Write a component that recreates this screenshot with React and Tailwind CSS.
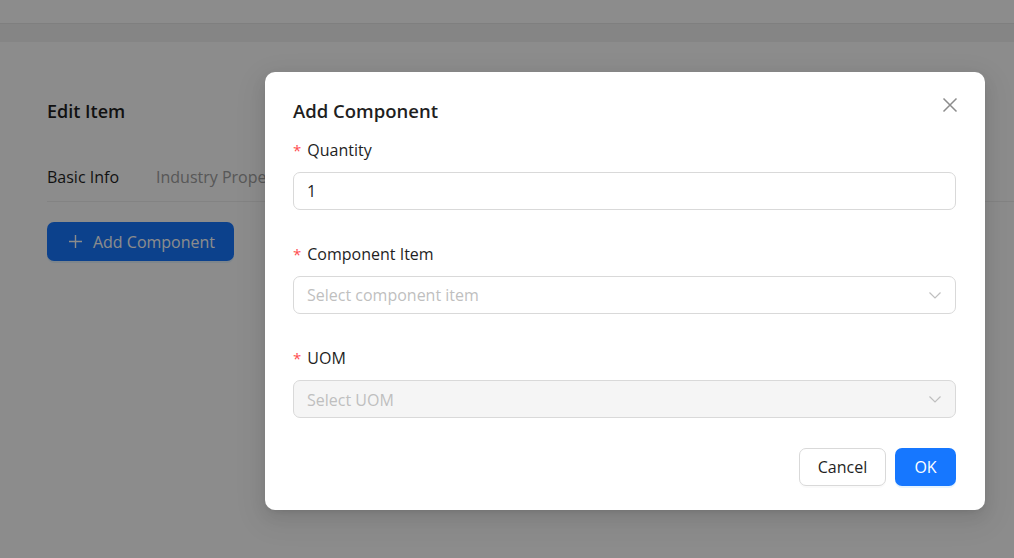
import React, { useState } from 'react';

const font = { fontFamily: '"Open Sans", "Noto Sans", sans-serif' };

const Chevron = () => (
  <svg width="14" height="14" viewBox="0 0 14 14" fill="none" className="text-[#bfbfbf]">
    <path d="M1.5 4.5 L7 10 L12.5 4.5" stroke="currentColor" strokeWidth="1.2" />
  </svg>
);

const Label = ({ children }) => (
  <div className="h-[26px] leading-[26px] mb-[9px] flex items-center text-[16px] text-[#1f1f1f]">
    <span className="text-[#ff4d4f] mr-[6px] text-[15px]">*</span>
    {children}
  </div>
);

const App = () => {
  const [quantity, setQuantity] = useState('1');

  return (
    <div className="relative w-[1014px] h-[558px] overflow-hidden bg-white" style={font}>
      {/* page under the modal */}
      <div className="h-[24px] bg-white border-b border-[#e8e8e8]" />
      <div className="h-[18px] bg-[#f3f3f3]" />
      <div className="bg-white pl-[47px] pt-[56px] h-full">
        <h2 className="text-[18px] font-semibold text-[#1f1f1f] leading-[26px]">Edit Item</h2>
        <div className="mt-[41px] flex gap-[37px] border-b border-[#eeeeee] pb-[12px] text-[16px]">
          <span className="text-[#1f1f1f]">Basic Info</span>
          <span className="text-[#a0a0a0]">Industry Properties</span>
        </div>
        <button className="mt-[20px] h-[39px] w-[187px] rounded-[7px] bg-[#1677ff] text-white text-[16px] flex items-center justify-center gap-[10px] pl-[2px] shadow-[0_2px_0_rgba(5,145,255,0.1)]">
          <svg width="15" height="15" viewBox="0 0 15 15" fill="none">
            <path d="M7.5 1v13M1 7.5h13" stroke="currentColor" strokeWidth="1.4" />
          </svg>
          Add Component
        </button>
      </div>

      {/* mask */}
      <div className="absolute inset-0 bg-black/45" />

      {/* modal */}
      <div className="absolute left-[265px] top-[72px] w-[720px] bg-white rounded-[10px] pl-[28px] pr-[29px] pt-[25px] pb-[24px] shadow-[0_6px_16px_rgba(0,0,0,0.08),0_3px_6px_-4px_rgba(0,0,0,0.12),0_9px_28px_8px_rgba(0,0,0,0.05)]">
        <button className="absolute right-[25px] top-[23px] w-[20px] h-[20px] flex items-center justify-center text-[#8c8c8c]">
          <svg width="16" height="16" viewBox="0 0 16 16" fill="none">
            <path d="M1.5 1.5 L14.5 14.5 M14.5 1.5 L1.5 14.5" stroke="currentColor" strokeWidth="1.5" />
          </svg>
        </button>
        <div className="text-[18.5px] font-semibold text-[#1f1f1f] leading-[28px] mb-[12px]">Add Component</div>

        <Label>Quantity</Label>
        <input
          value={quantity}
          onChange={(e) => setQuantity(e.target.value)}
          className="w-full h-[38px] rounded-[7px] border border-[#d9d9d9] px-[13px] text-[16px] text-[#1f1f1f] outline-none"
        />

        <div className="mt-[31px]">
          <Label>Component Item</Label>
          <div className="w-full h-[38px] rounded-[7px] border border-[#d9d9d9] pl-[13px] pr-[13px] flex items-center justify-between text-[16px] text-[#bfbfbf]">
            <span>Select component item</span>
            <Chevron />
          </div>
        </div>

        <div className="mt-[31px]">
          <Label>UOM</Label>
          <div className="w-full h-[38px] rounded-[7px] border border-[#d9d9d9] bg-[#f5f5f5] pl-[13px] pr-[13px] flex items-center justify-between text-[16px] text-[#bfbfbf]">
            <span className="pt-[2px]">Select UOM</span>
            <Chevron />
          </div>
        </div>

        <div className="mt-[30px] flex justify-end gap-[9px]">
          <button className="h-[38px] w-[87px] rounded-[7px] border border-[#d9d9d9] bg-white text-[16px] text-[#1f1f1f] shadow-[0_2px_0_rgba(0,0,0,0.02)]">
            Cancel
          </button>
          <button className="h-[38px] w-[61px] rounded-[7px] bg-[#1677ff] text-white text-[16px] shadow-[0_2px_0_rgba(5,145,255,0.1)]">
            OK
          </button>
        </div>
      </div>
    </div>
  );
};

export default App;
